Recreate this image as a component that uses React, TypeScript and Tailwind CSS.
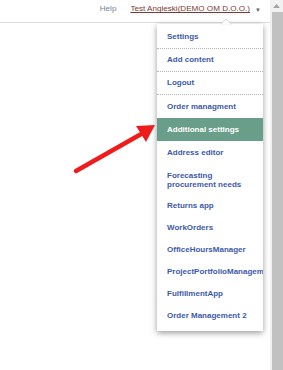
import React from 'react';

const items: { label: string; sep?: boolean; active?: boolean; lines?: string[]; pad: string }[] = [
  { label: 'Settings', sep: true, pad: 'py-[7px]' },
  { label: 'Add content', sep: true, pad: 'py-[7px]' },
  { label: 'Logout', sep: true, pad: 'py-[7px]' },
  { label: 'Order managment', pad: 'py-[7.5px]' },
  { label: 'Additional settings', active: true, pad: 'py-[7.5px]' },
  { label: 'Address editor', pad: 'py-[7.5px]' },
  { label: 'Forecasting procurement needs', lines: ['Forecasting', 'procurement needs'], pad: 'pt-[7px] pb-[6px]' },
  { label: 'Returns app', pad: 'py-[7px]' },
  { label: 'WorkOrders', pad: 'py-[7px]' },
  { label: 'OfficeHoursManager', pad: 'py-[7px]' },
  { label: 'ProjectPortfolioManagement', pad: 'py-[7px]' },
  { label: 'FulfillmentApp', pad: 'py-[7px]' },
  { label: 'Order Management 2', pad: 'py-[7px]' },
];

const App = () => {
  return (
    <div className="flex w-[283px] h-[370px] bg-white overflow-hidden" style={{ fontFamily: '"Liberation Sans", Arial, sans-serif' }}>
      {/* page */}
      <div className="relative flex-1 h-full">
        <div className="h-[23px] border-b border-[#dcdcdc] flex items-center justify-end pr-[9px] pb-[3px] text-[8.1px] leading-none">
          <span className="text-[#6d8597] mr-[14px]">Help</span>
          <span className="text-[#7b3a33] underline">Test Angleski(DEMO OM D.O.O.)</span>
          <span className="text-[#666] text-[6px] ml-[5px]">▼</span>
        </div>

        {/* dropdown */}
        <div className="absolute left-[157px] top-[24px] w-[106px] bg-white shadow-[0_2px_6px_rgba(0,0,0,0.4)] pt-[2px] pb-[4px]">
          <svg className="absolute -top-[5px] left-[63px]" width="12" height="6" viewBox="0 0 12 6">
            <path d="M0 6 L6 0 L12 6 Z" fill="#fff" stroke="#d0d0d0" strokeWidth="0.8" />
            <rect x="0" y="5.4" width="12" height="1" fill="#fff" />
          </svg>
          {items.map(it => (
            <div
              key={it.label}
              className={`pl-[10px] text-[8px] font-bold whitespace-nowrap overflow-hidden ${it.pad} ${
                it.active ? 'bg-[#699e8b] text-white' : 'text-[#3d5aa8]'
              } ${it.lines ? 'leading-[9px]' : 'leading-[8px]'} ${it.sep ? 'border-b border-dotted border-[#b5b5b5]' : ''}`}
            >
              {it.lines ? it.lines.map(l => <div key={l}>{l}</div>) : it.label}
            </div>
          ))}
        </div>

        {/* red arrow */}
        <svg className="absolute left-0 top-0" width="170" height="200" viewBox="0 0 170 200">
          <line x1="76" y1="171" x2="143" y2="133" stroke="#ee1c1c" strokeWidth="4.5" strokeLinecap="round" />
          <path d="M155 125 L136 126 L146 142 Z" fill="#ee1c1c" />
        </svg>
      </div>

      {/* scrollbar */}
      <div className="w-[13px] h-full bg-[#f1f1f1] flex flex-col">
        <div className="h-[12px] flex items-center justify-center">
          <svg width="7" height="4" viewBox="0 0 7 4">
            <path d="M0 4 L3.5 0 L7 4 Z" fill="#a3a3a3" />
          </svg>
        </div>
        <div className="flex-1 ml-[2px] bg-[#c1c1c1]" />
      </div>
    </div>
  );
};

export default App;
